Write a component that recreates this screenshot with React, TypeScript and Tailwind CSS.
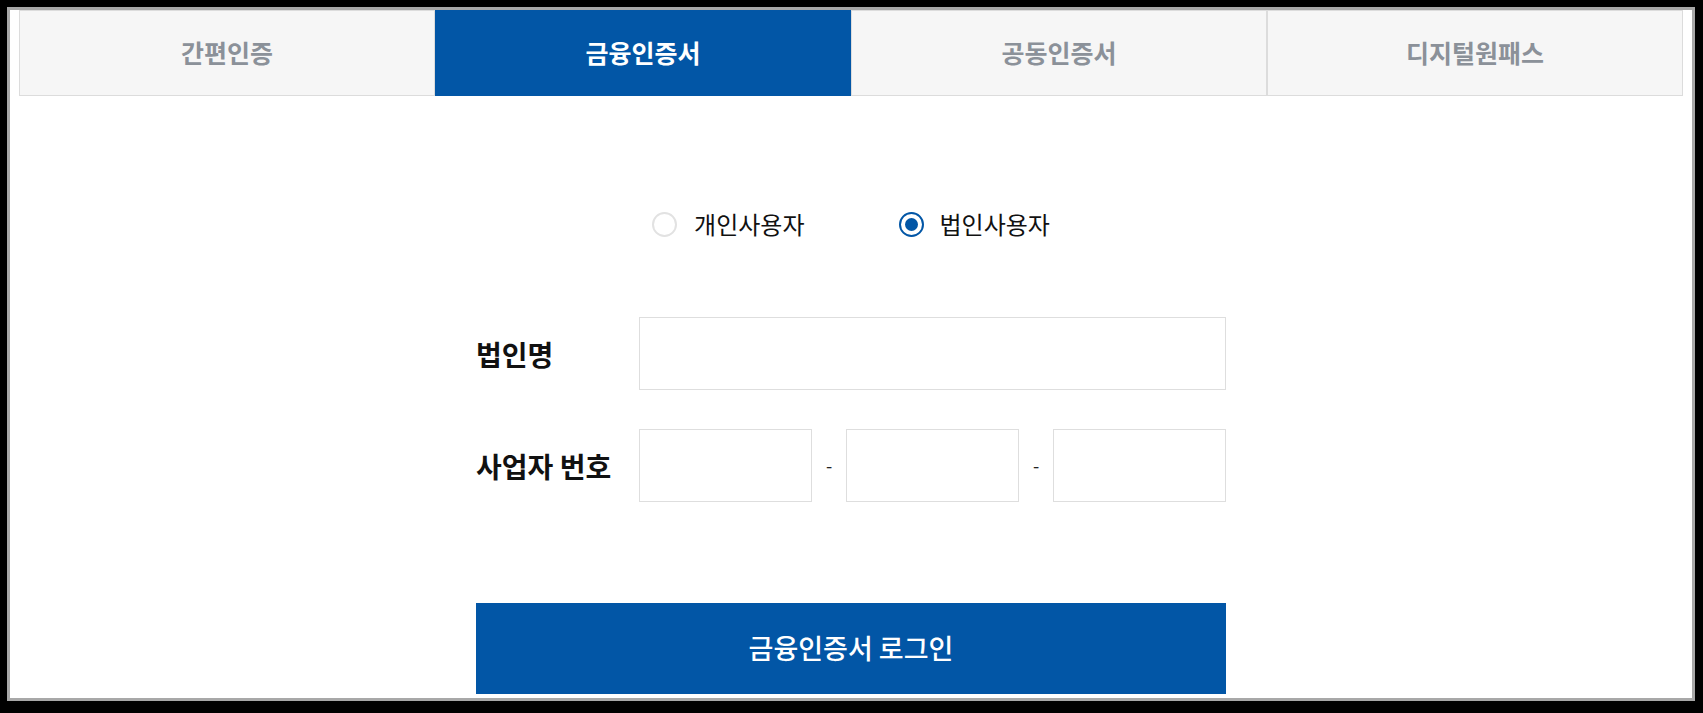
import React, { useState } from 'react';

const tabs = ['간편인증', '금융인증서', '공동인증서', '디지털원패스'];
const font = { fontFamily: '"Noto Sans CJK KR", "Noto Sans", sans-serif' };

export default function App() {
  const [tab, setTab] = useState(1);
  const [userType, setUserType] = useState('corp');

  return (
    <div className="h-[713px] w-full bg-black pt-[7px] pl-[7px] pr-[8px] pb-[12px]" style={font}>
      <div className="h-full bg-white border-[3px] border-[#a8a8a8] px-[9px]">
        {/* 탭 */}
        <div className="grid grid-cols-4 h-[86px]">
          {tabs.map((name, i) => (
            <button
              key={name}
              onClick={() => setTab(i)}
              className={`flex items-center justify-center text-[25px] font-bold ${
                tab === i
                  ? 'bg-[#0256a6] text-white'
                  : 'bg-[#f6f6f6] text-[#8b9199] border border-[#dcdcdc]'
              }`}
            >
              {name}
            </button>
          ))}
        </div>

        <div className="w-[750px] mx-auto">
          {/* 사용자 구분 */}
          <div className="flex justify-center items-center gap-[94px] mt-[116px] h-[24px]">
            <label className="flex items-center gap-[17px] cursor-pointer" onClick={() => setUserType('person')}>
              <span
                className={`w-[25px] h-[25px] rounded-full border-2 flex items-center justify-center ${
                  userType === 'person' ? 'border-[#0256a6]' : 'border-[#e2e2e2]'
                }`}
              >
                {userType === 'person' && <span className="w-[13px] h-[13px] rounded-full bg-[#0256a6]" />}
              </span>
              <span className="text-[24px] text-[#111]">개인사용자</span>
            </label>
            <label className="flex items-center gap-[16px] cursor-pointer" onClick={() => setUserType('corp')}>
              <span
                className={`w-[25px] h-[25px] rounded-full border-2 flex items-center justify-center ${
                  userType === 'corp' ? 'border-[#0256a6]' : 'border-[#e2e2e2]'
                }`}
              >
                {userType === 'corp' && <span className="w-[13px] h-[13px] rounded-full bg-[#0256a6]" />}
              </span>
              <span className="text-[24px] text-[#111]">법인사용자</span>
            </label>
          </div>

          {/* 입력 폼 */}
          <div className="mt-[81px] flex items-center">
            <span className="w-[163px] text-[28px] font-bold text-[#111]">법인명</span>
            <input className="w-[587px] h-[73px] border border-[#dedede] outline-none px-4 text-lg" />
          </div>
          <div className="mt-[39px] flex items-center">
            <span className="w-[163px] text-[28px] font-bold text-[#111] whitespace-nowrap">사업자 번호</span>
            <div className="flex items-center w-[587px]">
              <input className="w-[173px] h-[73px] border border-[#dedede] outline-none px-3 text-lg" />
              <span className="flex-1 text-center text-[18px] text-[#222]">-</span>
              <input className="w-[173px] h-[73px] border border-[#dedede] outline-none px-3 text-lg" />
              <span className="flex-1 text-center text-[18px] text-[#222]">-</span>
              <input className="w-[173px] h-[73px] border border-[#dedede] outline-none px-3 text-lg" />
            </div>
          </div>

          <button className="mt-[101px] w-full h-[91px] bg-[#0256a6] text-white text-[27px] font-medium">
            금융인증서 로그인
          </button>
        </div>
      </div>
    </div>
  );
}
